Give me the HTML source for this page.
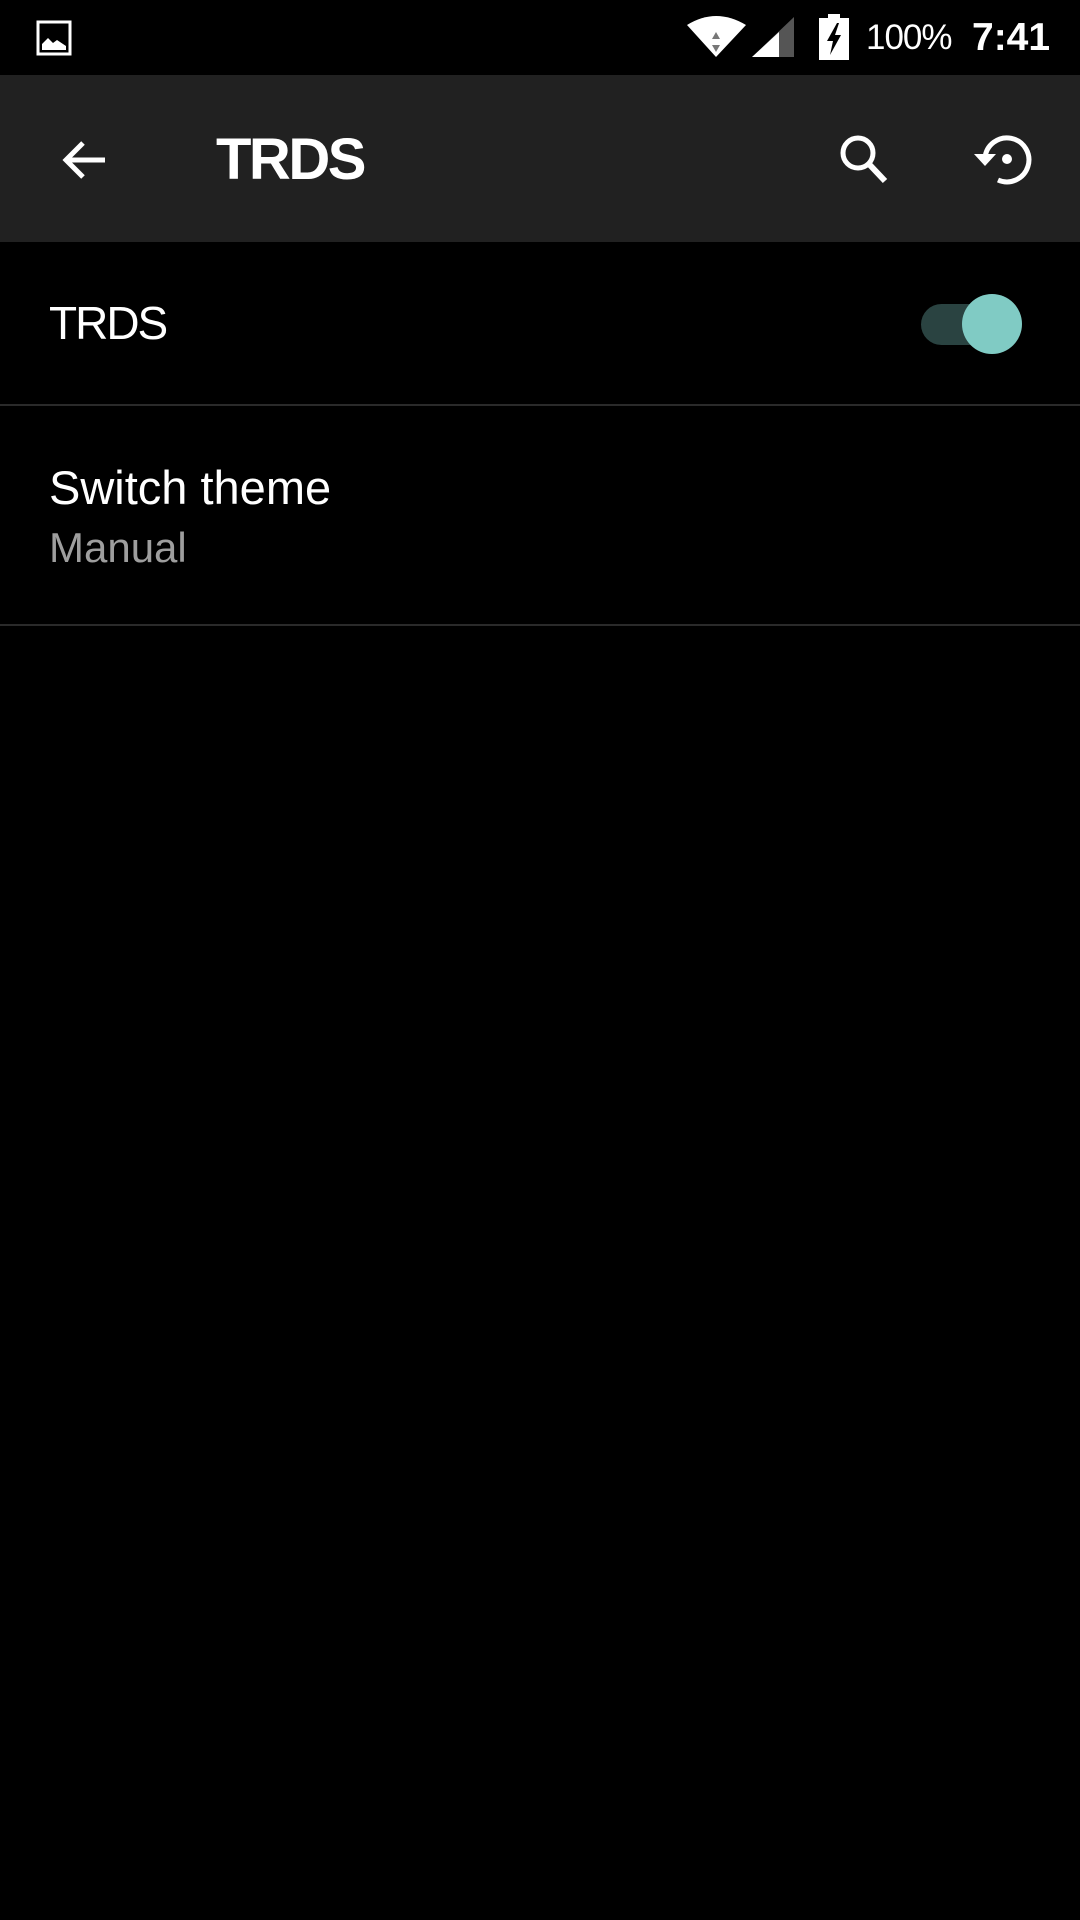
<!DOCTYPE html>
<html><head><meta charset="utf-8"><style>
body{margin:0;width:1080px;height:1920px;background:#000;font-family:"Liberation Sans",sans-serif;color:#fff;position:relative;overflow:hidden}
.a{position:absolute}
</style></head><body>
<div class="a" style="left:0;top:0;width:1080px;height:75px;background:#000"></div>
<svg class="a" style="left:36px;top:20px" width="36" height="36" viewBox="0 0 36 36"><rect x="2" y="2" width="32" height="32" fill="none" stroke="#fff" stroke-width="3"/><path d="M6 30 L6 24 L12 18 L17 23 L21 20 L30 26 L30 30Z" fill="#fff"/></svg>
<svg class="a" style="left:686px;top:15px" width="110" height="45" viewBox="0 0 110 45"><path d="M1 10 Q30 -8 60 10 L30 42Z" fill="#fff"/><path d="M30 17 L26 24 L34 24Z M30 37 L26 30 L34 30Z" fill="#777"/><path d="M108 2 L108 42 L66 42Z" fill="#555"/><path d="M93 17 L93 42 L66 42Z" fill="#fff"/></svg>
<svg class="a" style="left:818px;top:14px" width="32" height="46" viewBox="0 0 32 46"><rect x="10" y="0" width="12" height="5" fill="#fff"/><rect x="1" y="4" width="30" height="42" fill="#fff"/><path d="M19 9 L9 27 L15 27 L12 41 L23 21 L17 21 L21 9Z" fill="#000"/></svg>
<div class="a" style="left:866px;top:18px;font-size:35px;line-height:40px;letter-spacing:-1px">100%</div>
<div class="a" style="left:972px;top:16px;font-size:39px;line-height:44px;font-weight:bold">7:41</div>
<div class="a" style="left:0;top:75px;width:1080px;height:167px;background:#212121"></div>
<svg class="a" style="left:59px;top:135px" width="50" height="50" viewBox="0 0 50 50"><path d="M46 25 H8 M24 8 L7 25 L24 42" stroke="#fff" stroke-width="5" fill="none"/></svg>
<div class="a" style="left:216px;top:126px;font-size:58px;line-height:68px;font-weight:bold;letter-spacing:-2.5px">TRDS</div>
<svg class="a" style="left:834px;top:130px" width="60" height="60" viewBox="0 0 60 60"><circle cx="24" cy="23" r="15" stroke="#fff" stroke-width="5" fill="none"/><path d="M34 33 L51 51" stroke="#fff" stroke-width="6"/></svg>
<svg class="a" style="left:970px;top:128px" width="66" height="64" viewBox="0 0 66 64"><path d="M15 30 A22 22 0 1 1 28 52" stroke="#fff" stroke-width="5" fill="none"/><path d="M4 26 L26 26 L15 38Z" fill="#fff"/><circle cx="37" cy="31" r="5" fill="#fff"/></svg>
<div class="a" style="left:49px;top:295px;font-size:46px;line-height:56px;letter-spacing:-2px">TRDS</div>
<div class="a" style="left:921px;top:304px;width:100px;height:41px;border-radius:21px;background:#2a4341"></div>
<div class="a" style="left:962px;top:294px;width:60px;height:60px;border-radius:50%;background:#80cbc4"></div>
<div class="a" style="left:0;top:404px;width:1080px;height:2px;background:#2a2a2a"></div>
<div class="a" style="left:49px;top:460px;font-size:47px;line-height:56px">Switch theme</div>
<div class="a" style="left:49px;top:523px;font-size:42px;line-height:50px;color:#9e9e9e">Manual</div>
<div class="a" style="left:0;top:624px;width:1080px;height:2px;background:#2a2a2a"></div>
</body></html>
